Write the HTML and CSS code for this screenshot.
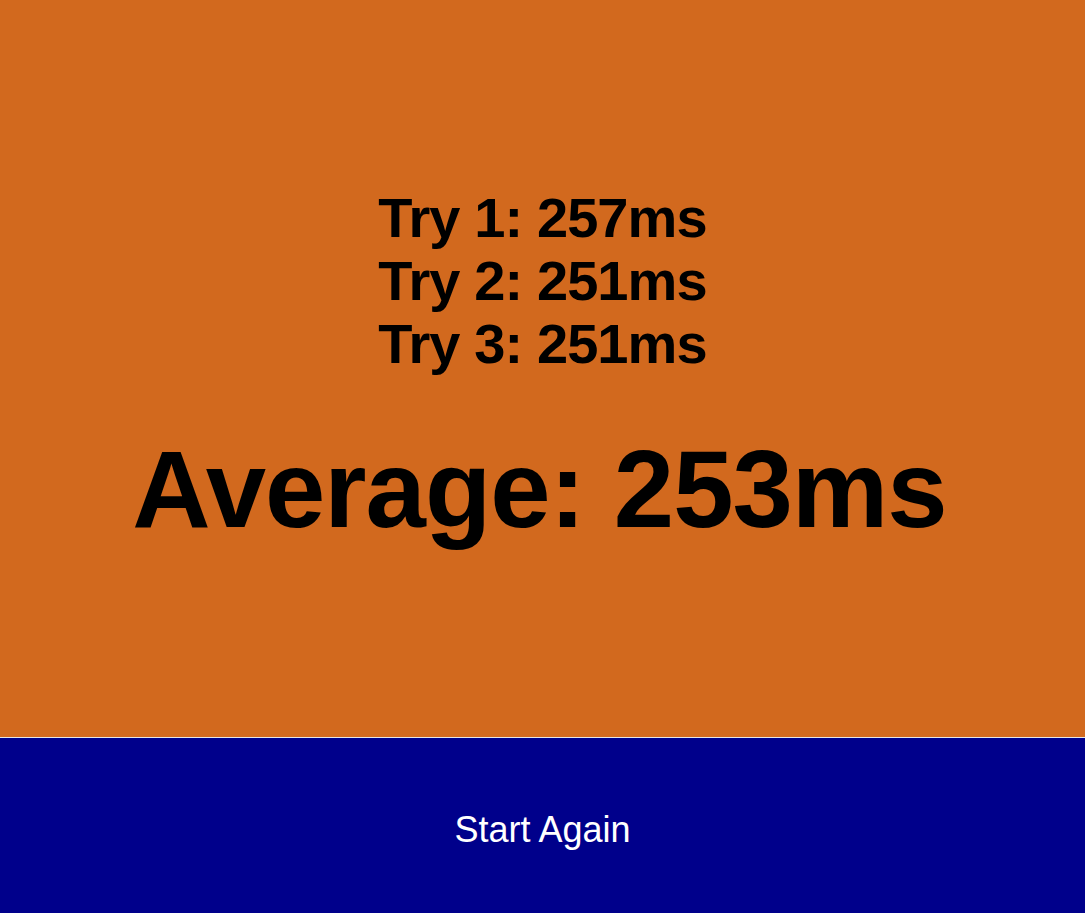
FILE: index.html
```html
<!DOCTYPE html>
<html lang="en">
<head>
<meta charset="utf-8">
<title>Reaction Time Results</title>
<link rel="stylesheet" href="styles.css">
</head>
<body>
<div class="app">
  <main class="results">
    <div class="tries">
      <div class="try">Try 1: 257ms</div>
      <div class="try">Try 2: 251ms</div>
      <div class="try">Try 3: 251ms</div>
    </div>
    <div class="average">Average: 253ms</div>
  </main>
  <button class="restart" type="button">Start Again</button>
</div>
</body>
</html>
```
FILE: styles.css
```css
html, body {
  margin: 0;
  padding: 0;
  height: 100%;
}
body {
  font-family: "Liberation Sans", Arial, sans-serif;
}
.app {
  display: flex;
  flex-direction: column;
  height: 100vh;
}
.results {
  flex: 1;
  background: #d2691e;
  color: #000;
  display: flex;
  flex-direction: column;
  align-items: center;
  justify-content: center;
  font-weight: bold;
  text-align: center;
}
.try {
  font-size: 56px;
  line-height: 63px;
  letter-spacing: -0.9px;
}
.average {
  font-size: 108.5px;
  line-height: 124px;
  letter-spacing: -1px;
  margin-top: 53px;
  margin-right: 6px;
}
.restart {
  height: 176px;
  flex: none;
  border: none;
  border-top: 1px solid #e6e6e6;
  background: #00008b;
  color: #fff;
  font-family: "Liberation Sans", Arial, sans-serif;
  font-size: 36px;
  padding: 8px 0 0;
  margin: 0;
  width: 100%;
  cursor: pointer;
}
```
